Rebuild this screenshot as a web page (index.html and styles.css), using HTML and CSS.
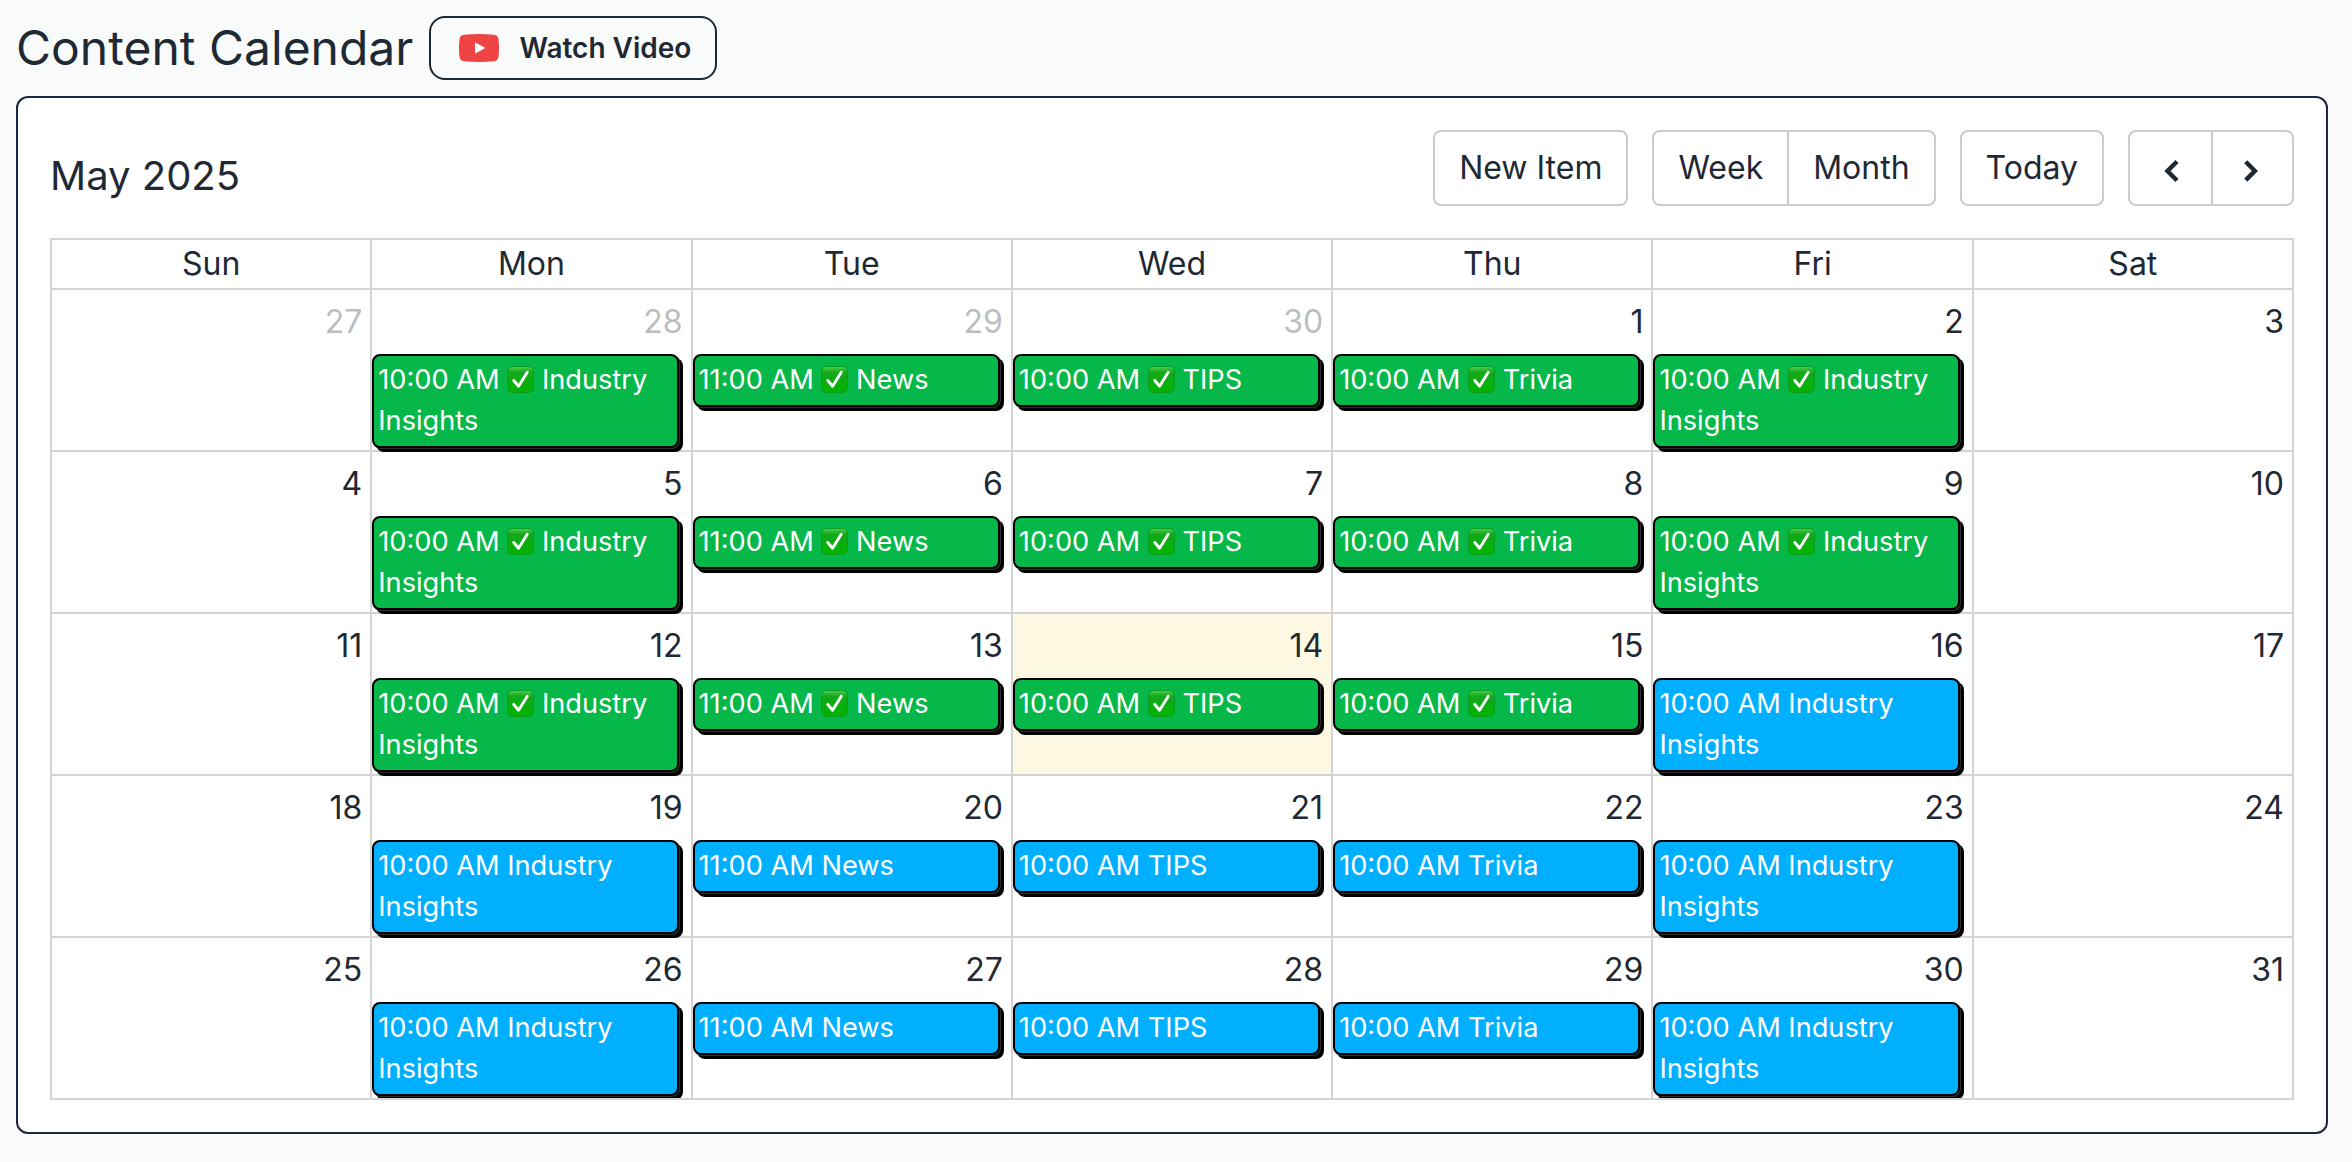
FILE: index.html
```html
<!DOCTYPE html>
<html lang="en">
<head>
<meta charset="utf-8">
<title>Content Calendar</title>
<link rel="stylesheet" href="styles.css">
</head>
<body>
<header class="page-head">
  <h1 class="page-title">Content Calendar</h1>
  <button class="watch">
    <svg class="watch-icon" viewBox="0 0 40 40"><path fill="#ef4444" d="M5 6.8Q20 5.2 35 6.8Q39 7.3 39.4 11Q40.6 20 39.4 29Q39 32.700 35 33.200Q20 34.800 5 33.200Q1 32.700.6 29Q-.6 20 .6 11Q1 7.300 5 6.800Z"/><path fill="#fff" d="M16 14.200L26.300 20L16 25.800Z"/></svg>
    <span>Watch Video</span>
  </button>
</header>
<main class="card">
  <div class="toolbar">
    <h2 class="month-title">May 2025</h2>
    <div class="actions">
      <div class="group"><button class="btn">New Item</button></div>
      <div class="group"><button class="btn">Week</button><button class="btn">Month</button></div>
      <div class="group"><button class="btn">Today</button></div>
      <div class="group">
        <button class="btn nav" aria-label="Previous"><svg class="chevron" viewBox="0 0 32 32"><path d="M22 9.500L12.500 19L22 28.500"/></svg></button>
        <button class="btn nav" aria-label="Next"><svg class="chevron" viewBox="0 0 32 32"><path d="M9 9.500L18.500 19L9 28.500"/></svg></button>
      </div>
    </div>
  </div>
  <div class="calendar">
    <div class="weekdays" id="weekdays"></div>
    <div class="days" id="days"></div>
  </div>
</main>
<script src="calendar.js"></script>
</body>
</html>
```
FILE: styles.css
```css
* { box-sizing: border-box; }
body {
  margin: 0;
  padding: 16px 24px 28px 16px;
  min-height: 1162px;
  background: #f9fbfb;
  color: #1f2933;
  font: 400 32px/48px Inter, "Liberation Sans", sans-serif;
}
button { font: inherit; color: inherit; margin: 0; background: transparent; }
h1, h2 { margin: 0; font-weight: 400; }
.page-head { display: flex; align-items: center; gap: 16px; height: 64px; margin-bottom: 16px; }
.page-title { font-size: 48px; line-height: 64px; white-space: nowrap; }
.watch {
  display: flex; align-items: center; gap: 20px;
  height: 64px; padding: 0 24px 0 28px;
  border: 2px solid #1f2933; border-radius: 16px;
  font-size: 28px; font-weight: 600; white-space: nowrap;
}
.watch-icon { width: 40px; height: 40px; }
.card { padding: 32px; background: #fff; border: 2px solid #1f2544; border-radius: 12px; }
.toolbar { display: flex; justify-content: space-between; height: 108px; }
.month-title { font-size: 40px; line-height: 60px; padding-top: 16px; }
.actions { display: flex; gap: 24px; height: 76px; }
.group { display: flex; border: 2px solid #ccc; border-radius: 8px; }
.btn { border: 0; padding: 0 24px; line-height: 72px; white-space: nowrap; }
.btn + .btn { border-left: 2px solid #ccc; }
.nav { width: 81px; display: flex; align-items: center; justify-content: center; }
.chevron { width: 32px; height: 32px; fill: none; stroke: #1f2933; stroke-width: 4.5; }
.calendar { border: 2px solid #d3d3d3; }
.weekdays, .days { display: grid; grid-template-columns: repeat(6, 320.286px) 1fr; }
.weekday { height: 48px; text-align: center; border-right: 2px solid #d3d3d3; }
.days { grid-auto-rows: 162px; height: 810px; overflow: hidden; border-top: 2px solid #d3d3d3; }
.day { min-width: 0; border-right: 2px solid #d3d3d3; border-bottom: 2px solid #d3d3d3; }
.weekday:nth-child(7n), .day:nth-child(7n) { border-right: 0; }
.today { background: #fdf8e1; }
.date { display: block; height: 64px; padding: 8px 8px 0; text-align: right; }
.outside { opacity: .3; }
.event {
  width: 307px; padding: 4px;
  border: 2px solid #000; border-radius: 8px;
  box-shadow: 1px 1px 0 #2e2e2e, 4px 4px 0 #000;
  background: #00b0ff; color: #fff;
  font-size: 27.2px; line-height: 40.8px;
}
.done { background: #06b84a; }
.check { width: 27px; height: 27px; vertical-align: -4px; }
```
FILE: calendar.js
```js
const names = ['Sun', 'Mon', 'Tue', 'Wed', 'Thu', 'Fri', 'Sat'];
const posts = [null, ['10:00 AM', 'Industry Insights'], ['11:00 AM', 'News'], ['10:00 AM', 'TIPS'],
  ['10:00 AM', 'Trivia'], ['10:00 AM', 'Industry Insights'], null];
const check = '<svg class="check" viewBox="0 0 28 28"><defs><linearGradient id="g" x1="0" y1="0" x2="0" y2="1"><stop offset="0" stop-color="#4fd04f"/><stop offset=".22" stop-color="#14a81c"/><stop offset="1" stop-color="#00b400"/></linearGradient></defs><rect x=".5" y=".5" width="27" height="27" rx="5" fill="url(#g)" stroke="#0a9a20"/><path d="M7 15L12 21L21 6.500" fill="none" stroke="#fff" stroke-width="3" stroke-linecap="round" stroke-linejoin="round"/></svg>';

document.getElementById('weekdays').innerHTML = names.map(n => `<div class="weekday">${n}</div>`).join('');

let html = '';
for (let i = 0; i < 35; i++) {
  const date = i < 4 ? 27 + i : i - 3;
  const post = posts[i % 7];
  const done = i < 19;
  html += `<div class="day${i === 17 ? ' today' : ''}"><span class="date${i < 4 ? ' outside' : ''}">${date}</span>`;
  if (post) html += `<div class="event${done ? ' done' : ''}">${post[0]} ${done ? check + ' ' : ''}${post[1]}</div>`;
  html += '</div>';
}
document.getElementById('days').innerHTML = html;
```
